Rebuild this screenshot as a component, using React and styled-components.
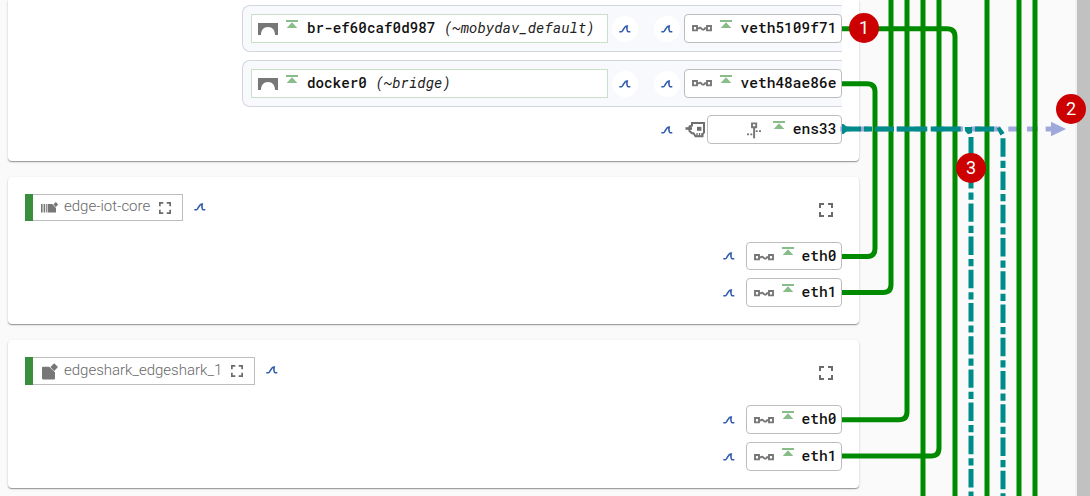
import React from 'react';
import styled, { createGlobalStyle } from 'styled-components';

const Global = createGlobalStyle`
  * { box-sizing: border-box; }
  body { margin: 0; background: #fafafa; font-family: Roboto, "Liberation Sans", sans-serif; overflow: hidden; }
`;

const Page = styled.div`
  position: relative;
  display: flex;
  width: 1090px;
  height: 496px;
  overflow: hidden;
  background: #fafafa;
`;
const Main = styled.main`
  flex: 1;
  padding-left: 8px;
  border-right: 2px solid #f1f1f1;
`;
const Scrollbar = styled.div`
  width: 13px;
  background: #c1c1c1;
`;
const Card = styled.section`
  width: 851px;
  height: ${p => p.$h}px;
  margin-bottom: 16px;
  padding: ${p => p.$pad || '0 17px'};
  background: #fff;
  border-radius: ${p => (p.$first ? '0 0 4px 4px' : '4px')};
  box-shadow: 0 1px 1px rgba(0,0,0,.34), 0 1px 3px rgba(0,0,0,.12);
`;
const Bridge = styled.div`
  display: flex;
  align-items: center;
  width: 600px;
  height: 47px;
  margin: 0 0 8px auto;
  padding-left: 8px;
  background: #f7f9fd;
  border: 1px solid #d3d7dc;
  border-right: 0;
  border-radius: 8px 0 0 8px;
`;
const BridgeBox = styled.div`
  display: flex;
  align-items: center;
  width: 358px;
  height: 29px;
  padding-left: 6px;
  background: #fff;
  border: 1px solid #c8dfc9;
`;
const Name = styled.span`
  font: ${p => p.$size || 14.27}px/20px "Roboto Mono", "DejaVu Sans Mono", "Liberation Mono", monospace;
  font-weight: 500;
  margin-bottom: 1px;
  color: #111;
  white-space: pre;
  i { font-weight: 400; color: #222; }
`;
const Round = styled.span`
  display: flex;
  align-items: center;
  justify-content: center;
  width: 26px;
  height: 26px;
  margin-left: ${p => p.$ml || 0}px;
  margin-right: ${p => p.$mr || 0}px;
  border-radius: 50%;
  background: #fff;
`;
const Nic = styled.div`
  display: flex;
  align-items: center;
  justify-content: flex-end;
  width: ${p => p.$w}px;
  height: ${p => p.$h || 29}px;
  padding-right: 4.5px;
  background: #fff;
  border: 1px solid #bdbdbd;
  border-radius: 4px;
  svg { flex: none; }
`;
const NicRow = styled.div`
  display: flex;
  align-items: center;
  justify-content: flex-end;
  margin-bottom: ${p => p.$mb || 0}px;
`;
const Head = styled.header`
  display: flex;
  align-items: flex-start;
  height: ${p => p.$h}px;
`;
const Badge = styled.div`
  display: flex;
  align-items: center;
  width: ${p => p.$w}px;
  height: ${p => p.$h}px;
  border: 1px solid #bdbdbd;
  border-left: 0;
  color: #686868;
  font-size: 15px;
  line-height: 20px;
`;
const Status = styled.span`
  width: 8px;
  height: ${p => p.$h}px;
  flex: none;
  margin-right: 8px;
  background: #388e3c;
`;
const BadgeText = styled.span`
  width: ${p => p.$w}px;
  margin: 0 8px 3px 5px;
  font-weight: 300;
  white-space: nowrap;
`;
const HeadFin = styled.span`
  margin: 9px auto 0 11px;
  line-height: 0;
`;
const HeadExpand = styled.span`
  margin: 9px 9px 0 0;
  line-height: 0;
`;
const Overlay = styled.svg`
  position: absolute;
  left: 0;
  top: 0;
`;
const Marker = styled.div`
  position: absolute;
  left: ${p => p.$x - 15}px;
  top: ${p => p.$y - 15}px;
  width: 30px;
  height: 30px;
  border-radius: 50%;
  background: #cc0000;
  color: #fff;
  font: 18px/30px Roboto, sans-serif;
  text-align: center;
`;
const Shift = styled.svg`
  margin-right: ${p => p.$mr || 0}px;
  margin-top: ${p => p.$mt || 0}px;
`;

const Fin = () => (
  <svg width="12" height="8" viewBox="0 0 12 8" fill="none" stroke="#2f5cad" strokeWidth="1.6">
    <path d="M.3 6.7H2.6C4.2 6.7 4.6 1.2 8.2 1 7.6 3.2 8 6.7 9.2 6.7H11.3" />
  </svg>
);
const Up = ({ mr, mt = -9 }) => (
  <Shift $mr={mr} $mt={mt} width="12" height="9" viewBox="0 0 12 9" fill="#88bd8a">
    <path d="M0 0H12V2H0zM6 2.2L11.3 8H.7z" />
  </Shift>
);
const Veth = ({ mr, mt = 0 }) => (
  <Shift $mr={mr} $mt={mt} width="20" height="7" viewBox="0 0 20 7" fill="none" stroke="#777" strokeWidth="1.9">
    <path d="M1 1h4v4.4H1zM15 1h4v4.4H15zM5 3.3H7C8.5 1.7 9 3.2 10 4.2S12 4.6 13 3.3h2" />
  </Shift>
);
const BridgeIcon = () => (
  <Shift $mr={8} width="20" height="12" viewBox="0 0 20 12" fill="#777">
    <path d="M0 0H20V12H17C17 7 14.5 4 10 4S3 7 3 12H0z" />
  </Shift>
);
const Expand = ({ s = 14 }) => (
  <svg width={s} height={s} viewBox="0 0 14 14" fill="none" stroke="#6b6b6b" strokeWidth="2">
    <path d="M1 5V1H5M9 1H13V5M13 9V13H9M5 13H1V9" />
  </svg>
);
const Adapter = () => (
  <Shift $mr={1} width="21" height="17" viewBox="0 0 21 17" fill="none" stroke="#6f6f6f" strokeWidth="2">
    <path d="M7 2H19V11.5L17.5 13.5V15.3H10.5L8.5 12.3H7L4.5 10V5.5L7 4.5z" />
    <path d="M.5 7.5H7" strokeWidth="2.6" />
    <path d="M12 5.8h4.4v4H12z" fill="#6f6f6f" stroke="none" />
    <path d="M12 12v3M14.5 12v3M17 12v2" strokeWidth="1.3" />
  </Shift>
);
const Plug = () => (
  <Shift $mr={10} $mt={2} width="16" height="17" viewBox="0 0 16 17" fill="none" stroke="#777">
    <path d="M5 1.4h4.2v3.8H5z" strokeWidth="1.9" />
    <path d="M7.1 5.2V16.4" strokeWidth="2" />
    <path d="M0 12.3H5.4M8.7 9.2H14.6" strokeWidth="1.8" strokeDasharray="2 1.3" />
  </Shift>
);
const Composer = () => (
  <svg width="18" height="12" viewBox="0 0 18 12" fill="#777">
    <path d="M0 2H1.6V10.6H0zM2.6 2H4.2V10.6H2.6zM5.2 2H6.4V10.6H5.2zM7 2H11.2L15 6V10.6H7zM14.8 0L17.2 2.5 14.8 5 12.4 2.5z" />
  </svg>
);
const Box = () => (
  <svg width="18" height="17" viewBox="0 0 18 17" fill="#777">
    <path d="M2 3.8H8.2L14 9.2V15.6Q14 16.4 13.2 16.4H2Q1 16.4 1 15.6V4.6Q1 3.8 2 3.8zM13.2 .3L17 4.1 13.2 7.9 9.4 4.1z" />
  </svg>
);

const BridgeRow = ({ name, alias, veth }) => (
  <Bridge>
    <BridgeBox>
      <BridgeIcon />
      <Up mr={9} />
      <Name>{name} <i>{alias}</i></Name>
    </BridgeBox>
    <Round $ml={4} $mr={16}><Fin /></Round>
    <Round $mr={4}><Fin /></Round>
    <Nic $w={158}><Veth mr={8} /><Up mr={8} /><Name $size={14.56}>{veth}</Name></Nic>
  </Bridge>
);
const Eth = ({ name, mb, h }) => (
  <NicRow $mb={mb}>
    <Round $mr={4}><Fin /></Round>
    <Nic $w={96} $h={h}><Veth mr={8} mt={2} /><Up mr={8} /><Name $size={14.56}>{name}</Name></Nic>
  </NicRow>
);

const greenPaths = [
  'M842 28.7H947Q955 28.7 955 36.7V500',
  'M842 83.7H867Q875 83.7 875 91.7V248.5Q875 256.5 867 256.5H842',
  'M891 0V284.5Q891 292.5 883 292.5H842',
  'M907 0V411.7Q907 419.7 899 419.7H842',
  'M939 0V448Q939 456 931 456H842',
  'M923 0V500', 'M987 0V500', 'M1019 0V500', 'M1035 0V500',
];

const Wires = () => (
  <Overlay width="1077" height="496" fill="none" strokeWidth="5">
    <path d="M840.3 129H1052" stroke="#9fa8da" strokeDasharray="10.67 8" />
    {greenPaths.map(d => <path key={d} d={d} stroke="#008a00" />)}
    <path d="M1051 121.7L1066 129 1051 136.3z" fill="#9fa8da" />
    <path d="M842 129H861M864 129H872M875 129H894M897 129H927.3M930.7 129H960.7M975 129H994" stroke="#008b8b" />
    <path d="M964.7 127H972V133L968 134.3L965 131zM996.8 128.5L1000 126.8L1004.6 133L1000.4 135.5z" fill="#008b8b" />
    <path d="M971 137V500" stroke="#008b8b" strokeDasharray="18.4 4 7.2 3.6" />
    <path d="M1003 138.3V500" stroke="#008b8b" strokeDasharray="18.4 4 7.2 3.65" />
    <path d="M842 124H843.5L847 127V131L843.5 134H842z" fill="#008b8b" />
  </Overlay>
);

export default function App() {
  return (
    <Page>
      <Global />
      <Main>
        <Card $first $h={161} $pad="5px 17px 0">
          <BridgeRow name="br-ef60caf0d987" alias="(~mobydav_default)" veth="veth5109f71" />
          <BridgeRow name="docker0" alias="(~bridge)" veth="veth48ae86e" />
          <NicRow>
            <Round $mr={5}><Fin /></Round>
            <Adapter />
            <Nic $w={135}><Plug /><Up mr={8} /><Name $size={14.56}>ens33</Name></Nic>
          </NicRow>
        </Card>
        <Card $h={147} $pad="17px 17px 0">
          <Head $h={48}>
            <Badge $w={158} $h={27}>
              <Status $h={27} /><Composer /><BadgeText $w={87}>edge-iot-core</BadgeText><Expand s={12} />
            </Badge>
            <HeadFin><Fin /></HeadFin>
            <HeadExpand><Expand /></HeadExpand>
          </Head>
          <Eth name="eth0" mb={8} h={28} />
          <Eth name="eth1" />
        </Card>
        <Card $h={148} $pad="17px 17px 0">
          <Head $h={48}>
            <Badge $w={230} $h={28}>
              <Status $h={28} /><Box /><BadgeText $w={159}>edgeshark_edgeshark_1</BadgeText><Expand s={12} />
            </Badge>
            <HeadFin><Fin /></HeadFin>
            <HeadExpand><Expand /></HeadExpand>
          </Head>
          <Eth name="eth0" mb={8} />
          <Eth name="eth1" />
        </Card>
      </Main>
      <Scrollbar />
      <Wires />
      <Marker $x={864} $y={28.3}>1</Marker>
      <Marker $x={1071} $y={109.3}>2</Marker>
      <Marker $x={971} $y={168.3}>3</Marker>
    </Page>
  );
}
